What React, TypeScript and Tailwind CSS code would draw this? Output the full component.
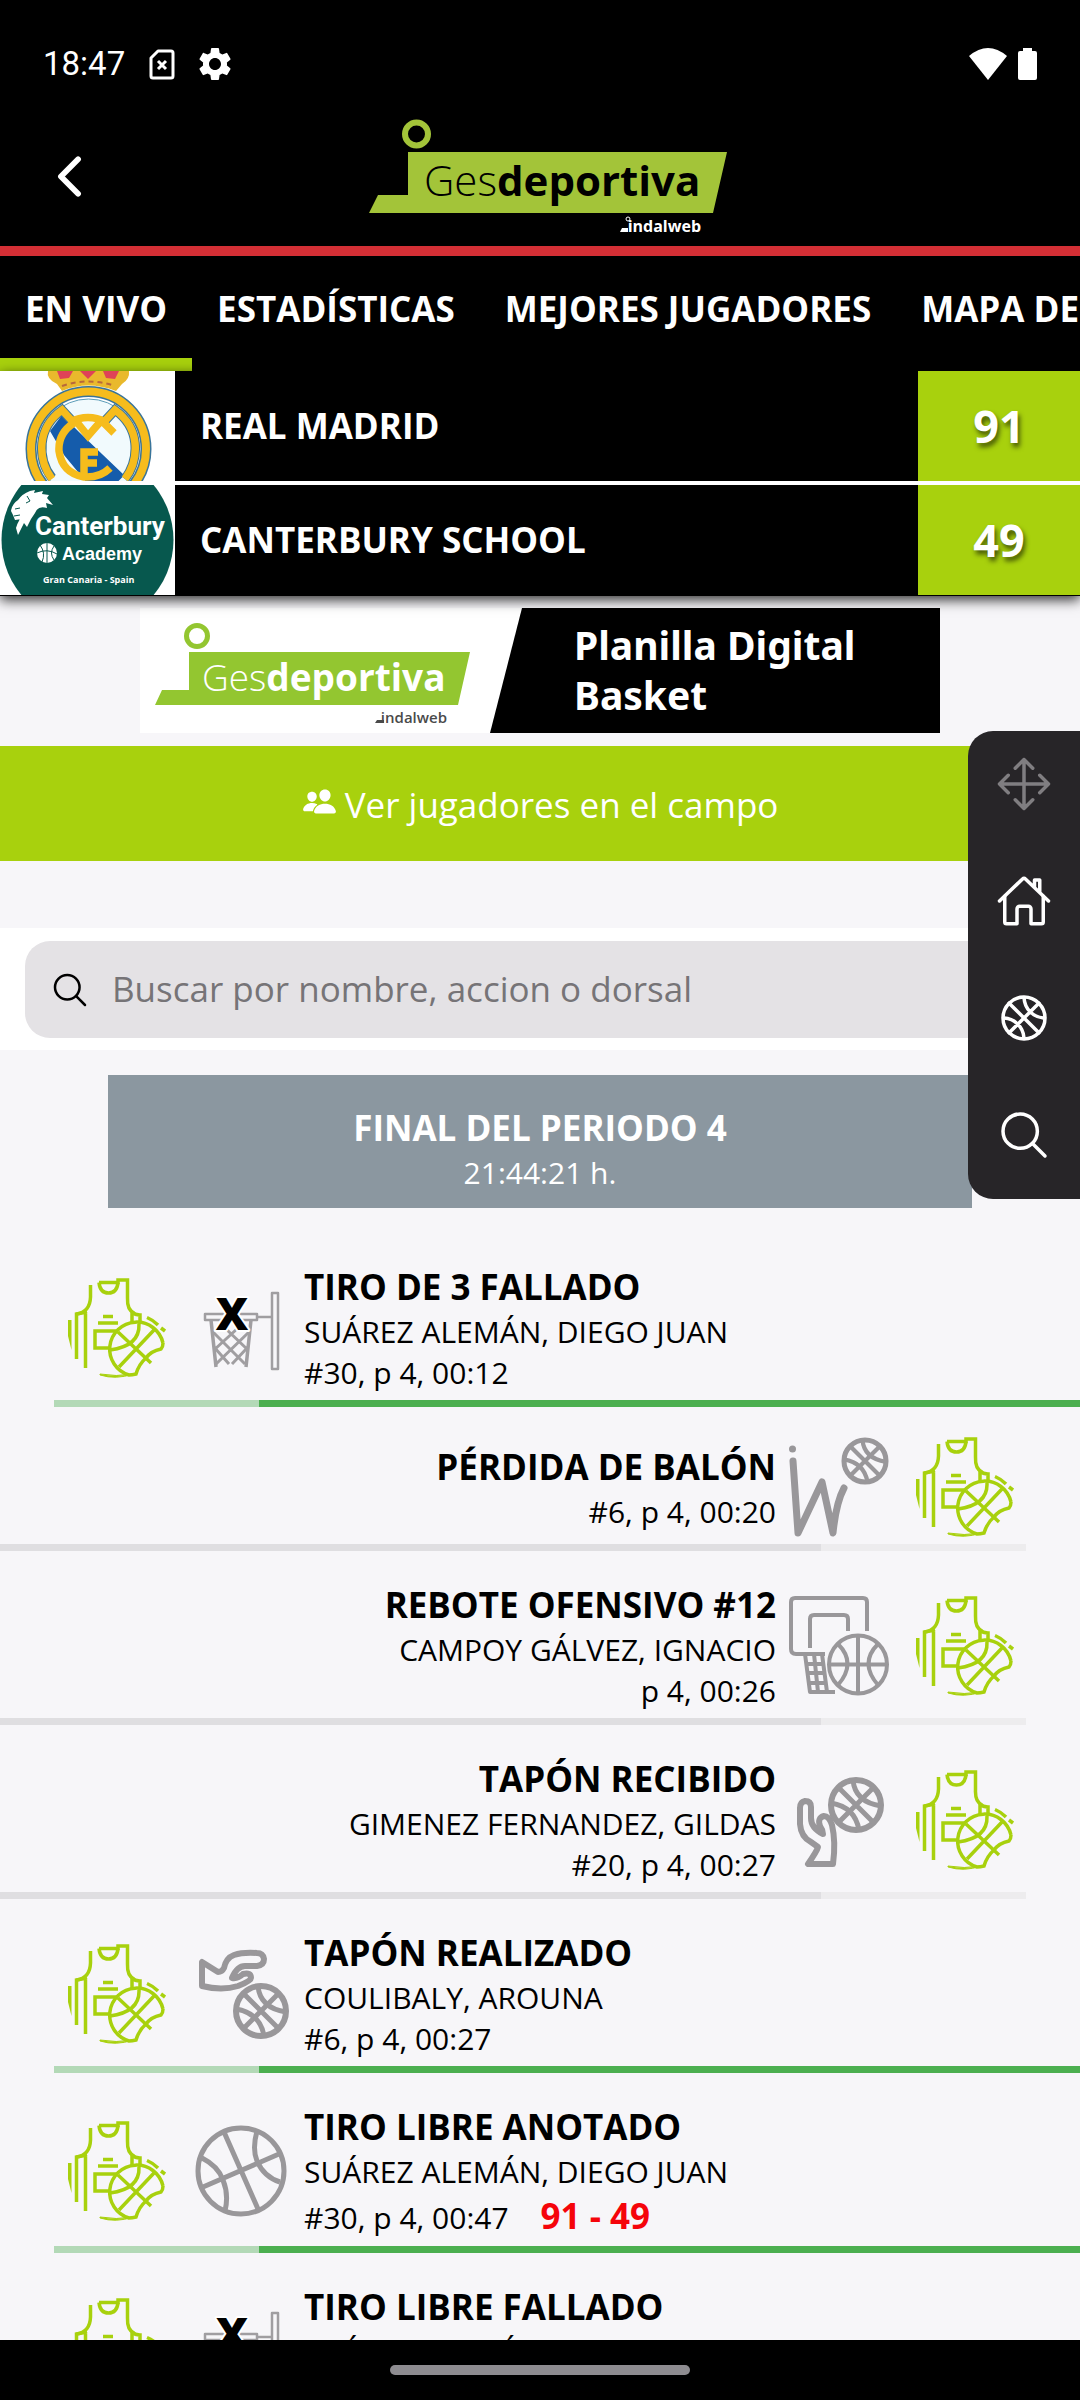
import React from 'react';
import {
    IoBasketballOutline,
    IoChevronBack,
    IoHomeOutline,
    IoMoveOutline,
    IoPeople,
    IoSearchOutline,
} from 'react-icons/io5';
import { MdSettings } from 'react-icons/md';

type IconName = 'missed' | 'turnover' | 'rebound' | 'blockAgainst' | 'block' | 'made';

interface PlayEvent {
    side: 'left' | 'right';
    icon: IconName;
    title: string;
    player?: string;
    meta: string;
    score?: string;
}

const TABS = ['EN VIVO', 'ESTADÍSTICAS', 'MEJORES JUGADORES', 'MAPA DE TIRO'];

const EVENTS: PlayEvent[] = [
    { side: 'left', icon: 'missed', title: 'TIRO DE 3 FALLADO', player: 'SUÁREZ ALEMÁN, DIEGO JUAN', meta: '#30, p 4, 00:12' },
    { side: 'right', icon: 'turnover', title: 'PÉRDIDA DE BALÓN', meta: '#6, p 4, 00:20' },
    { side: 'right', icon: 'rebound', title: 'REBOTE OFENSIVO #12', player: 'CAMPOY GÁLVEZ, IGNACIO', meta: 'p 4, 00:26' },
    { side: 'right', icon: 'blockAgainst', title: 'TAPÓN RECIBIDO', player: 'GIMENEZ FERNANDEZ, GILDAS', meta: '#20, p 4, 00:27' },
    { side: 'left', icon: 'block', title: 'TAPÓN REALIZADO', player: 'COULIBALY, AROUNA', meta: '#6, p 4, 00:27' },
    { side: 'left', icon: 'made', title: 'TIRO LIBRE ANOTADO', player: 'SUÁREZ ALEMÁN, DIEGO JUAN', meta: '#30, p 4, 00:47', score: '91 - 49' },
    { side: 'left', icon: 'missed', title: 'TIRO LIBRE FALLADO', player: 'SUÁREZ ALEMÁN, DIEGO JUAN', meta: '#30, p 4, 00:47' },
];

const StatusBar: React.FC = () => (
    <div className="flex h-[106px] items-center justify-between pt-[22px] pr-[43px] pl-[43px] text-white">
        <div className="flex items-center">
            <span className="font-[Roboto] text-[33px]">18:47</span>
            <svg className="ml-6 h-8 w-[26px]" viewBox="0 0 26 32" fill="none" stroke="currentColor" strokeWidth="3">
                <path d="M9 3H22Q24 3 24 5V28Q24 30 22 30H4Q2 30 2 28V10Z" strokeLinejoin="round" />
                <path d="M9 13l8 8M17 13l-8 8" />
            </svg>
            <MdSettings className="ml-5 h-10 w-10" />
        </div>
        <div className="flex items-center gap-[11px]">
            <svg className="h-8 w-[38px]" viewBox="0 0 38 32" fill="currentColor">
                <path d="M0 8Q19 -8 38 8L19 32Z" />
            </svg>
            <svg className="h-8 w-[19px]" viewBox="0 0 19 32" fill="currentColor">
                <path d="M5 0h9v3h3q2 0 2 2v25q0 2-2 2H2q-2 0-2-2V5q0-2 2-2h3z" />
            </svg>
        </div>
    </div>
);

const HeaderLogo: React.FC = () => (
    <svg className="h-[128px] w-[376px]" viewBox="352 112 376 128" role="img" aria-label="Gesdeportiva">
        <circle cx="416.5" cy="134" r="11.5" fill="none" stroke="#a3c439" strokeWidth="6" />
        <path d="M408 152H727L713 213H369L378 195H408Z" fill="#a3c439" />
        <text x="424" y="196" fontFamily="Open Sans" fontSize="42" fontWeight="300" fill="#000">
            Ges<tspan fontWeight="700">deportiva</tspan>
        </text>
        <text x="701" y="232" textAnchor="end" fontFamily="Open Sans" fontSize="16" fontWeight="700" fill="#fff">indalweb</text>
        <path d="M620 232l2-4h6v4z" fill="#fff" />
        <circle cx="628" cy="219" r="2" fill="none" stroke="#fff" />
    </svg>
);

const Banner: React.FC = () => (
    <a href="#planilla" className="flex h-[125px] w-[800px] bg-white">
        <svg className="h-full w-[382px]" viewBox="140 608 382 125" role="img" aria-label="Gesdeportiva">
            <circle cx="197" cy="636" r="10.5" fill="none" stroke="#93c630" strokeWidth="5" />
            <path d="M189 652H470L458 705H155L162 690H189Z" fill="#93c630" />
            <text x="202" y="691" fontFamily="Open Sans" fontSize="37" fontWeight="300" fill="#fff">
                Ges<tspan fontWeight="700">deportiva</tspan>
            </text>
            <text x="447" y="723" textAnchor="end" fontFamily="Open Sans" fontSize="15" fontWeight="600" fill="#4a4a4a">indalweb</text>
            <path d="M375 723l2-3h7v3z" fill="#4a4a4a" />
            <path d="M522 608V733H490Z" fill="#000" />
        </svg>
        <p className="flex-1 bg-black pt-3 pl-[52px] font-['Noto_Sans'] text-[39px] leading-[50px] font-bold text-white">
            Planilla Digital
            <br />
            Basket
        </p>
    </a>
);

const MadridCrest: React.FC = () => (
    <svg className="h-[110px] w-[175px] bg-white" viewBox="0 0 175 110" role="img" aria-label="Real Madrid">
        <path d="M48 0H129Q130 8 122 13L116 20Q88 9 62 20L57 13Q46 8 48 0Z" fill="#e9b92c" />
        <path d="M57 0h16l-4 7-9 1zM80 0h16l-8 8zM103 0h16l-4 8-9-1z" fill="#df4257" />
        <path d="M62 15Q88 6 115 15" fill="none" stroke="#b9683a" strokeWidth="2" strokeDasharray="5 4" />
        <circle cx="88.5" cy="78" r="57.5" fill="#fff" stroke="#39749a" strokeWidth="11" />
        <circle cx="88.5" cy="78" r="57.5" fill="none" stroke="#f6bc1c" strokeWidth="8" />
        <circle cx="88.5" cy="78" r="50" fill="#f1fafd" stroke="#5b9cb8" strokeWidth="1" />
        <path d="M50 60L62 44L80 62L124 104Q112 120 92 118L64 84Z" fill="#155cab" />
        <g fill="none" stroke="#39749a" strokeWidth="9.5">
            <path d="M52 107Q40 92 42 72Q44 52 62 39L74 52" />
            <path d="M125 108Q137 92 135 72Q133 52 115 39L103 52" />
        </g>
        <g fill="none" stroke="#f6bc1c" strokeWidth="7.5">
            <path d="M52 108Q40 92 42 72Q44 52 62 39L74 52" />
            <path d="M125 108Q137 92 135 72Q133 52 115 39L103 52" />
            <path d="M74 52Q58 62 59 80Q62 102 84 106Q100 107 110 97" />
            <path d="M70 51Q88 42 106 51" />
            <path d="M76 50L88 65L101 50M102 50L114 62" />
            <path d="M84 106V81H98M84 92H97" />
        </g>
    </svg>
);

const CanterburyCrest: React.FC = () => (
    <svg className="h-[110px] w-[175px] bg-white" viewBox="0 0 175 110" role="img" aria-label="Canterbury Academy">
        <circle cx="87.5" cy="55" r="86" fill="#07584e" />
        <path d="M11 26Q12 19 18 15Q22 9 30 6L35 5L34 8L43 6L42 9L49 10L47 13L53 20L46 18L47 23Q38 20 35 28L31 34L27 42L24 38L18 50L16 43Q18 35 25 28L22 34L15 35L13 30Z" fill="#fff" />
        <path d="M27 11l3 5-4 2M15 24l5-1M14 31l6-1" fill="none" stroke="#07584e" />
        <g fill="#fff" fontWeight="700">
            <text x="35" y="50" fontSize="26" fontFamily="Roboto">Canterbury</text>
            <text x="62" y="75" fontSize="18" fontFamily="Liberation Sans">Academy</text>
            <text x="43" y="98" fontSize="9" fontFamily="Open Sans">Gran Canaria - Spain</text>
        </g>
        <circle cx="47" cy="68" r="10" fill="#fff" />
        <path d="M47 58V78M37 68Q47 63 57 69M40 60Q46 68 42 77M54 61Q49 68 54 75" fill="none" stroke="#07584e" />
    </svg>
);

const Jersey: React.FC = () => (
    <svg className="h-[100px] w-[100px] shrink-0" viewBox="0 0 100 100" fill="none" stroke="#a8d10d" strokeWidth="3.5">
        <path d="M24.5 7V19Q24 34 10.5 36V81" />
        <path d="M10.5 36L21 34M19.500 34V90" />
        <path d="M2 42V58L5.5 72V42Z" fill="#a8d10d" stroke="none" />
        <path d="M33 4.500H52V2H61.500V20Q61 32 68 35" />
        <path d="M33 4.500Q34 15 42.500 15Q51 15 52 4.500" />
        <path d="M66 45V34Q69 37 74 37V46" />
        <path d="M37 38.500H47M32 45H52M52 53H29V70H44" />
        <path d="M97 65A27 27 0 1 0 63 97Q66 97 70 96Q73 86 80 80Q85 73 95 71Q97 69 97 65" />
        <path d="M52 54L85 85M88 52L53 89M73 46Q74 68 44 72" />
        <path d="M34 96Q50 99 67 96Q50 102 34 97Z" fill="#a8d10d" strokeWidth="1" />
        <path d="M81 39.500Q87 42 92 47M95 50L99 53" />
    </svg>
);

// small ball shared by several of the action drawings
const Ball: React.FC<{ cx: number; cy: number; r: number }> = ({ cx, cy, r }) => (
    <g transform={`translate(${cx} ${cy}) scale(${r / 25})`} fill="none" strokeWidth="5">
        <circle r="25" strokeWidth="6" />
        <path d="M-17 -17L17 17M17 -17L-17 17" />
        <path d="M-3 -25Q-1 -3 25 1M-25 -2Q-1 2 3 25" />
    </g>
);

const ActionIcon: React.FC<{ name: IconName }> = ({ name }) => (
    <svg className="h-[100px] w-[100px] shrink-0" viewBox="0 0 100 100" fill="none" stroke="#99979a" strokeWidth="4" strokeLinejoin="round">
        {name === 'missed' && (
            <>
                <g strokeWidth="2" stroke="#a09ea1">
                    <path d="M14 36H66V42H14ZM66 39H81M81 15H87V91H81Z" strokeWidth="2.5" />
                    <path d="M20 42L25 89M60 42L55 89" strokeWidth="3.5" />
                    <path d="M22 54L54 86M23 69L38 86M58 54L25 86M57 69L41 86M34 50L57 72M47 50L23 72" strokeWidth="3" />
                </g>
                <text x="41" y="52" textAnchor="middle" fontFamily="Open Sans" fontSize="45" fontWeight="800" fill="#000" stroke="#fff" strokeWidth="4" paintOrder="stroke">X</text>
            </>
        )}
        {name === 'turnover' && (
            <>
                <circle cx="3.5" cy="12" r="3.5" fill="#99979a" stroke="none" />
                <path d="M4 24L9 96L33 45L44 96Q47 66 55 51" strokeWidth="7" strokeLinecap="round" />
                <Ball cx={76} cy={24} r={21} />
            </>
        )}
        {name === 'rebound' && (
            <>
                <path d="M78 35V6Q78 2 74 2H6Q2 2 2 6V53Q2 58 7 58H36" />
                <path d="M21 52V23Q21 19 25 19H55Q59 19 59 23V35" />
                <path d="M16 58L21 96H46M25 58L29 96M33 58L38 96M17 68H36M18 77H37M20 87H37" />
                <circle cx="69" cy="68.5" r="29" />
                <path d="M69 40V98M40 68.500H98M49 48Q68 67 49 89M89 48Q70 67 89 89" />
            </>
        )}
        {name === 'blockAgainst' && (
            <>
                <path d="M19 94H44Q47 72 43 55Q40 46 35 46Q28 48 31 56Q34 60 34 64Q22 58 22 48V37Q22 31 16 31Q11 32 11 38V54Q12 67 22 72L29 77Q28 81 19 94Z" strokeWidth="6" />
                <Ball cx={67} cy={35} r={25} />
            </>
        )}
        {name === 'block' && (
            <>
                <path d="M11 18V42Q31 47 47 42Q60 37 60 34Q60 28 52 30Q47 35 41 34Q46 22 54 22H66Q73 21 73 15Q72 9 66 9Q52 8 43 11Q35 14 33 24Q31 28 27 28Z" strokeWidth="6" />
                <Ball cx={70} cy={67} r={25} />
            </>
        )}
        {name === 'made' && (
            <g strokeWidth="5">
                <circle cx="50" cy="50" r="43" />
                <path d="M33 11L67 88M12 66L88 33M66 10Q61 28 66 40Q73 56 89 61M11 37Q27 45 32 59Q38 74 34 90" />
            </g>
        )}
    </svg>
);

const EventRow: React.FC<{ event: PlayEvent }> = ({ event }) => {
    const isLeft = event.side === 'left';

    return (
        <li className={isLeft ? 'ml-[5%]' : 'mr-[5%]'}>
            <div className={`flex items-center pt-[30px] pb-[7px] ${isLeft ? 'pl-3' : 'flex-row-reverse pr-3 text-right'}`}>
                <Jersey />
                <div className={isLeft ? 'ml-[25px]' : 'mr-[25px]'}>
                    <ActionIcon name={event.icon} />
                </div>
                <div className="px-[13px]">
                    <h3 className="text-[35px] leading-[48px] font-bold">{event.title}</h3>
                    {event.player && <p className="text-[30px] leading-[41px]">{event.player}</p>}
                    <p className="text-[30px] leading-[41px]">
                        {event.meta}
                        {event.score && <strong className="ml-8 text-[35px] leading-[47px] text-[#f5040a]">{event.score}</strong>}
                    </p>
                </div>
            </div>
            <div className={`flex h-[7px] ${isLeft ? '' : 'flex-row-reverse'}`}>
                <div className={`w-1/5 ${isLeft ? 'bg-[#b3d9b7]' : 'bg-[#edecee]'}`} />
                <div className={`flex-1 ${isLeft ? 'bg-[#4caf50]' : 'bg-[#dfdee1]'}`} />
            </div>
        </li>
    );
};

const TeamRow: React.FC<{ name: string; score: number; crest: React.ReactNode }> = ({ name, score, crest }) => (
    <div className="flex h-[110px] items-center bg-black text-white">
        {crest}
        <h2 className="flex-1 pl-[25px] text-[35px] font-bold">{name}</h2>
        <div className="flex h-full w-[15%] items-center justify-center bg-[#a8d10d] text-[45px] font-bold text-shadow-[2px_4px_5px_rgba(0,0,0,0.6)]">
            {score}
        </div>
    </div>
);

const SideMenu: React.FC = () => (
    <nav className="absolute top-[731px] right-0 flex w-28 flex-col rounded-l-[25px] bg-[#272528] text-[56px] text-white">
        <button aria-label="Mover" className="flex h-[117px] items-center justify-center pb-3 text-[#807e81]">
            <IoMoveOutline />
        </button>
        <button aria-label="Inicio" className="flex h-[117px] items-center justify-center pb-3">
            <IoHomeOutline />
        </button>
        <button aria-label="Partidos" className="flex h-[117px] items-center justify-center pb-3">
            <IoBasketballOutline />
        </button>
        <button aria-label="Buscar" className="flex h-[117px] items-center justify-center pb-3">
            <IoSearchOutline />
        </button>
    </nav>
);

const App: React.FC = () => {
    return (
        <div className="relative flex h-screen flex-col overflow-hidden bg-[#f7f6f9] font-['Open_Sans',sans-serif] text-black">
            <header className="shrink-0 border-b-[10px] border-[#d42f35] bg-black">
                <StatusBar />
                <div className="grid h-[140px] grid-cols-[1fr_auto_1fr] items-center">
                    <button aria-label="Volver" className="w-fit pl-[39px] text-[61px] text-white">
                        <IoChevronBack />
                    </button>
                    <HeaderLogo />
                </div>
            </header>

            <nav className="flex shrink-0 overflow-hidden bg-black text-[35px] font-bold whitespace-nowrap text-white">
                {TABS.map((tab, i) => (
                    <button
                        key={tab}
                        className={`h-[115px] shrink-0 border-b-[13px] px-[25px] pt-1 ${i === 0 ? 'border-[#a8d10d]' : 'border-transparent'}`}
                    >
                        {tab}
                    </button>
                ))}
            </nav>

            <section className="z-10 flex shrink-0 flex-col gap-1 border-b border-black bg-white shadow-[0_4px_12px_rgba(0,0,0,0.8)]">
                <TeamRow name="REAL MADRID" score={91} crest={<MadridCrest />} />
                <TeamRow name="CANTERBURY SCHOOL" score={49} crest={<CanterburyCrest />} />
            </section>

            <main className="min-h-0 flex-1 overflow-hidden">
                <div className="flex justify-center pt-3 pb-[13px]">
                    <Banner />
                </div>

                <button className="flex h-[115px] w-full items-center justify-center gap-2 bg-[#a8d10d] pt-1 text-[35px] text-white">
                    <IoPeople className="mb-2 h-[35px] w-[35px]" />
                    Ver jugadores en el campo
                </button>

                <div className="mt-[67px] bg-white px-[25px] pt-[13px] pb-3">
                    <label className="flex h-[97px] items-center rounded-[25px] bg-[#e4e2e5] pl-[25px]">
                        <IoSearchOutline className="h-10 w-10 shrink-0" />
                        <input
                            type="search"
                            aria-label="Buscar"
                            placeholder="Buscar por nombre, accion o dorsal"
                            className="ml-[22px] flex-1 bg-transparent text-[35px] outline-none placeholder:text-[#767477]"
                        />
                    </label>
                </div>

                <div className="mx-auto mt-[25px] w-4/5 bg-[#8b97a0] pt-[29px] pb-[15px] text-center text-white">
                    <h3 className="text-[35px] leading-[48px] font-bold">FINAL DEL PERIODO 4</h3>
                    <p className="text-[30px] leading-[41px]">21:44:21 h.</p>
                </div>

                <ul className="mt-[25px]">
                    {EVENTS.map((event, i) => (
                        <EventRow key={i} event={event} />
                    ))}
                </ul>
            </main>

            <SideMenu />

            <footer className="flex h-[60px] shrink-0 justify-center bg-black pt-[25px]">
                <div className="h-[10px] w-[300px] rounded-full bg-[#8e8c90]" />
            </footer>
        </div>
    );
};

export default App;
